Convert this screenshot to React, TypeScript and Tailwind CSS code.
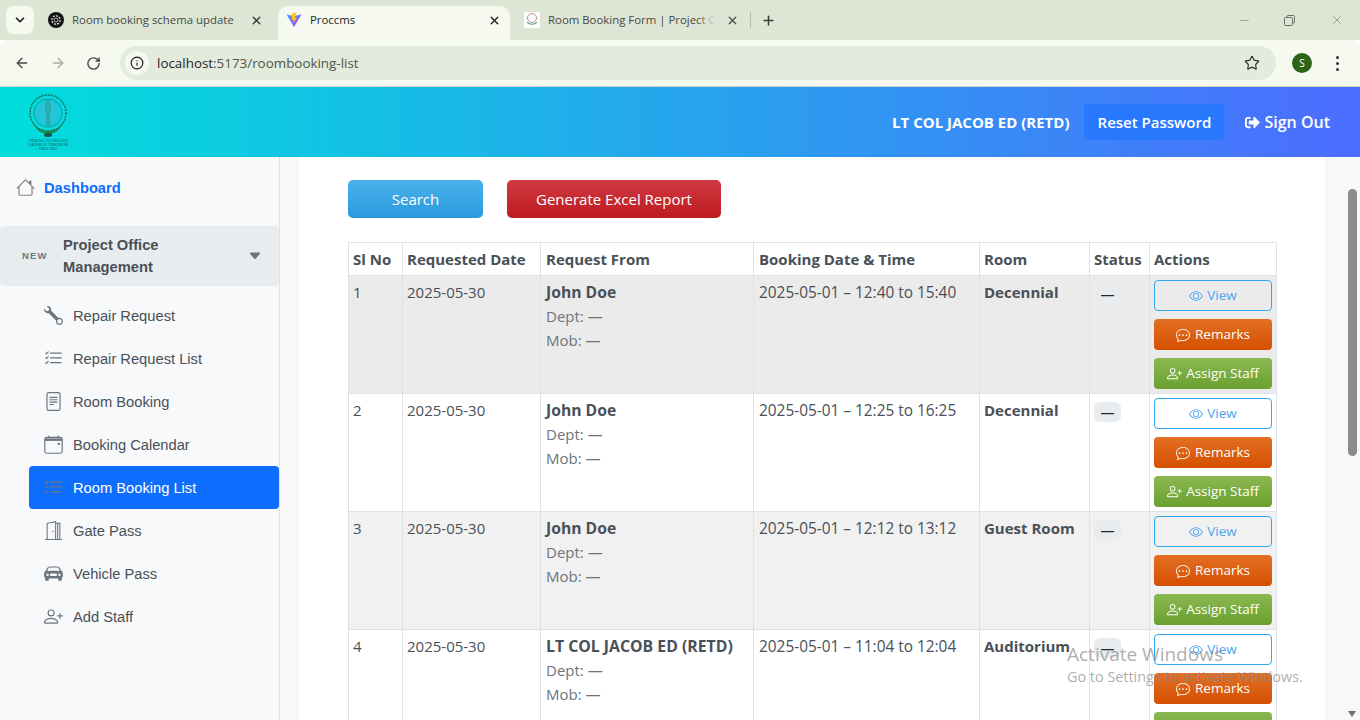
import React from "react";
import { ArrowLeft, ArrowRight, RotateCw, Info, Star, X, Plus, ChevronDown, Minus } from "lucide-react";
import {
  BsHouse, BsWrench, BsListCheck, BsFileText, BsListUl, BsCarFrontFill,
  BsPersonPlus, BsEye, BsChatDots, BsCaretDownFill,
} from "react-icons/bs";
import { FaSignOutAlt } from "react-icons/fa";

const segoe = "font-['Open_Sans','Noto_Sans',sans-serif]";
const arial = "font-['Liberation_Sans',Arial,sans-serif]";

function Logo() {
  return (
    <div className="flex w-[44px] flex-col items-center">
      <svg width="40" height="44" viewBox="0 0 40 44" fill="none">
        <circle cx="20" cy="19" r="18" stroke="#1c6a5f" strokeWidth="1.4" strokeDasharray="2 1" />
        <circle cx="20" cy="19" r="14" stroke="#2a8f96" strokeWidth="1" />
        <circle cx="20" cy="19" r="12" fill="#24c4da" />
        <path d="M20 6c3 4 3 10 1 14l1 11h-4l1-11C17 15 17 10 20 6Z" fill="#27b5a8" stroke="#2a9a96" strokeWidth="0.7" />
        <path d="M4 27c3 9 10 13 16 13s13-4 16-13c-2 5-9 10-16 10S6 32 4 27Z" fill="#1d8a4c" />
        <ellipse cx="20" cy="41" rx="4" ry="2" fill="#15534c" />
      </svg>
      <div className="mt-[1px] whitespace-nowrap text-center text-[3.4px] leading-[4px] text-[#10585f]">
        CREATING TECHNOLOGY
        <br />
        LEADERS OF TOMORROW
        <br />
        SINCE 2002
      </div>
    </div>
  );
}

function CalendarIcon({ className = "" }: { className?: string }) {
  return (
    <svg viewBox="0 0 18 18" fill="none" stroke="currentColor" className={className}>
      <rect x="0.75" y="2.25" width="16.5" height="15" rx="1.8" strokeWidth="1.1" />
      <path d="M1 3.2h16V5.6H1Z" fill="currentColor" stroke="none" />
      <path d="M4.5 0.6v2M13.5 0.6v2" strokeWidth="1.3" />
      <rect x="13" y="7.4" width="2" height="2" fill="currentColor" stroke="none" />
    </svg>
  );
}

function DoorIcon({ className = "" }: { className?: string }) {
  return (
    <svg viewBox="0 0 18 18" fill="none" stroke="currentColor" strokeWidth="1" className={className}>
      <path d="M1 17.5h16M3 17.5V2.2L11 0.6v16.9M11 2.2h4v15.3M13 2.2v15.3" />
      <circle cx="8.6" cy="10" r="0.7" fill="currentColor" stroke="none" />
    </svg>
  );
}

function Actions() {
  return (
    <div className="flex flex-col gap-[8px]">
      <button className="flex h-[31px] w-[118px] items-center justify-center gap-[4px] rounded-[4px] border border-[#2ea8ee] text-[13.5px] text-[#4ba3ef]">
        <BsEye className="h-[14px] w-[14px]" /> View
      </button>
      <button className="flex h-[31px] w-[118px] items-center justify-center gap-[5px] rounded-[4px] bg-linear-to-b/srgb from-[#e36f24] to-[#d55000] text-[13.5px] text-white">
        <BsChatDots className="h-[14px] w-[14px]" /> Remarks
      </button>
      <button className="flex h-[31px] w-[118px] items-center justify-center gap-[4px] rounded-[4px] bg-linear-to-b/srgb from-[#8ab851] to-[#6ba030] text-[13.5px] text-white">
        <BsPersonPlus className="h-[15px] w-[15px]" /> Assign Staff
      </button>
    </div>
  );
}

const rows = [
  { n: 1, from: "John Doe", when: "2025-05-01 – 12:40 to 15:40", room: "Decennial", bg: "bg-[#ebebeb]" },
  { n: 2, from: "John Doe", when: "2025-05-01 – 12:25 to 16:25", room: "Decennial", bg: "bg-white" },
  { n: 3, from: "John Doe", when: "2025-05-01 – 12:12 to 13:12", room: "Guest Room", bg: "bg-[#f1f1f1]" },
  { n: 4, from: "LT COL JACOB ED (RETD)", when: "2025-05-01 – 11:04 to 12:04", room: "Auditorium", bg: "bg-white" },
];

const items: { label: string; Icon: React.ComponentType<{ className?: string }>; active?: boolean }[] = [
  { label: "Repair Request", Icon: BsWrench },
  { label: "Repair Request List", Icon: BsListCheck },
  { label: "Room Booking", Icon: BsFileText },
  { label: "Booking Calendar", Icon: CalendarIcon },
  { label: "Room Booking List", Icon: BsListUl, active: true },
  { label: "Gate Pass", Icon: DoorIcon },
  { label: "Vehicle Pass", Icon: BsCarFrontFill },
  { label: "Add Staff", Icon: BsPersonPlus },
];

const headers: [string, string][] = [
  ["Sl No", "pl-[4px]"],
  ["Requested Date", "pl-[4px]"],
  ["Request From", "pl-[5px]"],
  ["Booking Date & Time", "pl-[5px] text-[15.4px]"],
  ["Room", "pl-[4px]"],
  ["Status", "pl-[4px] text-[14.6px]"],
  ["Actions", "pl-[4px]"],
];

const th = "border border-[#dee2e6] py-0 text-left text-[15px] font-bold text-[#495057]";
const td = "border border-[#dee2e6] px-[4px] pt-[4px] pb-[4px] align-top";

export default function App() {
  return (
    <div className={`relative flex h-[720px] w-[1360px] flex-col overflow-hidden bg-white ${segoe}`}>
      {/* Tab strip */}
      <div className="flex h-[40px] items-end bg-[#dee5d5] text-[11.4px] text-[#454a42]">
        <div className="mb-[6px] ml-[6px] flex h-[28px] w-[28px] shrink-0 items-center justify-center rounded-[8px] bg-[#f6f9f0]">
          <ChevronDown className="h-[14px] w-[14px] text-[#1f1f1f]" strokeWidth={3} />
        </div>
        <div className="flex h-[40px] w-[244px] shrink-0 items-center pl-[14px]">
          <svg width="16" height="16" viewBox="0 0 16 16" className="shrink-0">
            <circle cx="8" cy="8" r="8" fill="#111" />
            <circle cx="8" cy="8" r="4.2" fill="none" stroke="#ddd" strokeWidth="1.2" strokeDasharray="2.2 1" />
            <circle cx="8" cy="8" r="2" fill="none" stroke="#ddd" strokeWidth="0.8" />
          </svg>
          <span className="ml-[8px] w-[164px] shrink-0 whitespace-nowrap">Room booking schema update</span>
          <X className="ml-[14px] h-[13px] w-[13px] shrink-0 text-[#333]" strokeWidth={2.4} />
        </div>
        <div className="flex h-[34px] w-[232px] shrink-0 items-center rounded-t-[10px] bg-[#f6f9f0] pb-[6px] pl-[8px] text-[#1f1f1f]">
          <svg width="16" height="16" viewBox="0 0 16 16" className="shrink-0">
            <defs>
              <linearGradient id="vt" x1="0" y1="0" x2="1" y2="1">
                <stop offset="0" stopColor="#41a5ff" />
                <stop offset="1" stopColor="#bd34fe" />
              </linearGradient>
            </defs>
            <path d="M0.5 2.5 8 15 15.5 2.5 8 4Z" fill="url(#vt)" />
            <path d="M10.5 0.5 6 1.5 5.6 8 8 7.4 7.4 11.5 11 5.5 8.9 6Z" fill="#ffc517" />
          </svg>
          <span className="ml-[8px] w-[178px] shrink-0">Proccms</span>
          <X className="h-[13px] w-[13px] shrink-0 text-[#1f1f1f]" strokeWidth={2.6} />
        </div>
        <div className="flex h-[40px] w-[270px] shrink-0 items-center pl-[14px]">
          <div className="flex h-[16px] w-[16px] shrink-0 items-center justify-center bg-white">
            <svg width="12" height="14" viewBox="0 0 12 14" fill="none">
              <circle cx="6" cy="5" r="4.5" stroke="#b98f9a" />
              <path d="M1 9c2 3 8 3 10 0" stroke="#5aa06a" strokeWidth="1.2" />
            </svg>
          </div>
          <span className="relative ml-[8px] w-[167px] shrink-0 overflow-hidden whitespace-nowrap">
            Room Booking Form | Project Office
            <span className="absolute inset-y-0 right-0 w-[18px] bg-linear-to-r from-transparent to-[#dee5d5]" />
          </span>
          <X className="ml-[11px] h-[13px] w-[13px] shrink-0 text-[#454a42]" strokeWidth={2.4} />
          <div className="ml-[11px] h-[16px] w-[1px] shrink-0 bg-[#b4b9ad]" />
          <Plus className="ml-[10px] h-[15px] w-[15px] shrink-0 text-[#3c403a]" strokeWidth={2.4} />
        </div>
        <div className="flex h-[40px] flex-1 items-center justify-end text-[#6b7066]">
          <Minus className="mr-[33px] h-[13px] w-[13px]" strokeWidth={1} />
          <svg width="11" height="11" viewBox="0 0 11 11" fill="none" stroke="currentColor" className="mr-[35px]">
            <rect x="0.5" y="2.5" width="8" height="8" rx="1" />
            <path d="M3 2.5V1.5a1 1 0 0 1 1-1h5.5a1 1 0 0 1 1 1V7a1 1 0 0 1-1 1H8.5" />
          </svg>
          <X className="mr-[16px] h-[14px] w-[14px]" strokeWidth={1} />
        </div>
      </div>
      {/* Toolbar */}
      <div className="flex h-[47px] items-start rounded-t-[8px] border-b border-[#cfd3ca] bg-[#f6f9f0] pt-[6px]">
        <div className="flex h-[34px] w-[120px] items-center text-[#454a42]">
          <ArrowLeft className="ml-[14px] h-[16px] w-[16px]" strokeWidth={2} />
          <ArrowRight className="ml-[20px] h-[16px] w-[16px] text-[#a9aea4]" strokeWidth={2} />
          <RotateCw className="ml-[20px] h-[15px] w-[15px]" strokeWidth={2.2} />
        </div>
        <div className="flex h-[34px] w-[1156px] items-center rounded-full bg-[#e3ebdc] pl-[5px] pr-[16px]">
          <div className="flex h-[24px] w-[24px] items-center justify-center rounded-full bg-[#f6f9f0]">
            <Info className="h-[14px] w-[14px] text-[#1f1f1f]" strokeWidth={2} />
          </div>
          <div className="ml-[8px] flex-1 pt-[1px] text-[13.4px] text-[#1f1f1f]">
            localhost<span className="text-[#50554c]">:5173/roombooking-list</span>
          </div>
          <Star className="h-[16px] w-[16px] text-[#2f332d]" strokeWidth={1.8} />
        </div>
        <div className="flex h-[34px] flex-1 items-center">
          <div className="ml-[16px] flex h-[20px] w-[20px] items-center justify-center rounded-full bg-[#2d6418] text-[10px] text-white">S</div>
          <div className="ml-[24px] flex flex-col gap-[3px]">
            <span className="h-[3px] w-[3px] rounded-full bg-[#2f332d]" />
            <span className="h-[3px] w-[3px] rounded-full bg-[#2f332d]" />
            <span className="h-[3px] w-[3px] rounded-full bg-[#2f332d]" />
          </div>
        </div>
      </div>
      {/* App header */}
      <header className="flex h-[70px] shrink-0 items-center justify-between bg-linear-to-r/srgb from-[#00dedb] to-[#4c6cff] pl-[26px] pr-[30px]">
        <Logo />
        <div className="flex items-center text-white">
          <span className="text-[15px] font-bold">LT COL JACOB ED (RETD)</span>
          <button className="ml-[15px] h-[36px] w-[140px] rounded-[4px] bg-[#2979ff] text-[15px] font-semibold">Reset Password</button>
          <span className="ml-[21px] flex items-center gap-[4px] text-[16px] font-semibold">
            <FaSignOutAlt className="h-[15px] w-[15px]" /> Sign Out
          </span>
        </div>
      </header>
      {/* Body */}
      <div className="flex min-h-0 flex-1">
        <aside className={`w-[280px] shrink-0 border-r border-[#dee2e6] bg-[#f8f9fb] ${arial}`}>
          <div className="flex h-[69px] items-start pt-[21px] pl-[16px]">
            <BsHouse className="h-[19px] w-[19px] text-[#8a7f74]" />
            <span className="ml-[9px] mt-[1px] text-[14.7px] font-bold leading-[19px] text-[#0d6efd]">Dashboard</span>
          </div>
          <div className="flex h-[60px] items-center rounded-[4px] bg-[#e9ecef] pl-[22px] pr-[17px]">
            <span className="w-[41px] text-[9.5px] font-bold tracking-[1.2px] text-[#6c757d]">NEW</span>
            <span className="flex-1 text-[14.7px] font-bold leading-[22px] text-[#495057]">
              Project Office
              <br />
              Management
            </span>
            <BsCaretDownFill className="h-[14px] w-[14px] text-[#6c757d]" />
          </div>
          <div className="mt-[8px] ml-[29px]">
            {items.map(({ label, Icon, active }) => (
              <div
                key={label}
                className={`flex h-[43px] items-center rounded-[4px] pl-[15px] text-[14.7px] ${active ? "bg-[#0d6efd] text-white" : "text-[#495057]"}`}
              >
                <Icon className="h-[19px] w-[19px] shrink-0 text-[#6c757d]" />
                <span className="ml-[10px] pt-[1px]">{label}</span>
              </div>
            ))}
          </div>
        </aside>
        <main className="flex min-w-0 flex-1 bg-[#f8f8f8] pl-[19px]">
          <div className="w-[1026px] shrink-0 bg-white px-[49px] pt-[23px]">
            <div className="flex gap-[24px]">
              <button className="h-[38px] w-[135px] rounded-[5px] bg-linear-to-b/srgb from-[#4bb1ec] to-[#2a99dd] text-[15px] text-white">Search</button>
              <button className="h-[38px] w-[214px] rounded-[5px] bg-linear-to-b/srgb from-[#d03a42] to-[#be1a20] text-[15px] text-white">Generate Excel Report</button>
            </div>
            <table className="mt-[24px] w-[928px] table-fixed border-collapse text-[15px] text-[#495057]">
              <colgroup>
                <col className="w-[54px]" />
                <col className="w-[138px]" />
                <col className="w-[213px]" />
                <col className="w-[226px]" />
                <col className="w-[110px]" />
                <col className="w-[60px]" />
                <col className="w-[127px]" />
              </colgroup>
              <thead>
                <tr className="h-[33px]">
                  {headers.map(([h, c]) => (
                    <th key={h} className={`${th} ${c} whitespace-nowrap`}>{h}</th>
                  ))}
                </tr>
              </thead>
              <tbody>
                {rows.map((r) => (
                  <tr key={r.n} className={r.bg}>
                    <td className={td}><div className="leading-[24px]">{r.n}</div></td>
                    <td className={td}><div className="leading-[24px]">2025-05-30</div></td>
                    <td className={`${td} pl-[5px]`}>
                      <div className={`whitespace-nowrap font-bold leading-[24px] ${r.n === 4 ? "text-[15.8px]" : "text-[15.7px]"}`}>{r.from}</div>
                      <div className="leading-[24px] text-[#6c757d]">Dept: —</div>
                      <div className="leading-[24px] text-[#6c757d]">Mob: —</div>
                    </td>
                    <td className={`${td} pl-[5px]`}><div className="whitespace-nowrap pt-[1px] text-[15.4px] leading-[24px]">{r.when}</div></td>
                    <td className={td}><div className="whitespace-nowrap font-bold leading-[24px]">{r.room}</div></td>
                    <td className={td}>
                      <div className="mt-[4px] flex h-[20px] w-[27px] items-center justify-center rounded-[6px] bg-[#e9ecef] text-[14px] text-[#212529]">—</div>
                    </td>
                    <td className={td}><Actions /></td>
                  </tr>
                ))}
              </tbody>
            </table>
          </div>
          <div className="w-[20px] shrink-0 bg-[#f8f8f8]" />
          <div className="relative w-[15px] shrink-0 bg-[#f8f8f8]">
            <div className="absolute left-[3px] top-[32px] h-[267px] w-[9px] rounded-full bg-[#8b8b8b]" />
            <div className="absolute bottom-[3px] left-[3px] h-0 w-0 border-x-[4.5px] border-t-[6px] border-x-transparent border-t-[#6f6f6f]" />
          </div>
        </main>
      </div>
      {/* Windows activation watermark */}
      <div className="pointer-events-none absolute left-[1067px] top-[642px] text-[#8a8a8a]/70">
        <div className="text-[19px] leading-[24px]">Activate Windows</div>
        <div className="mt-[1px] text-[14.4px] leading-[20px]">Go to Settings to activate Windows.</div>
      </div>
    </div>
  );
}
